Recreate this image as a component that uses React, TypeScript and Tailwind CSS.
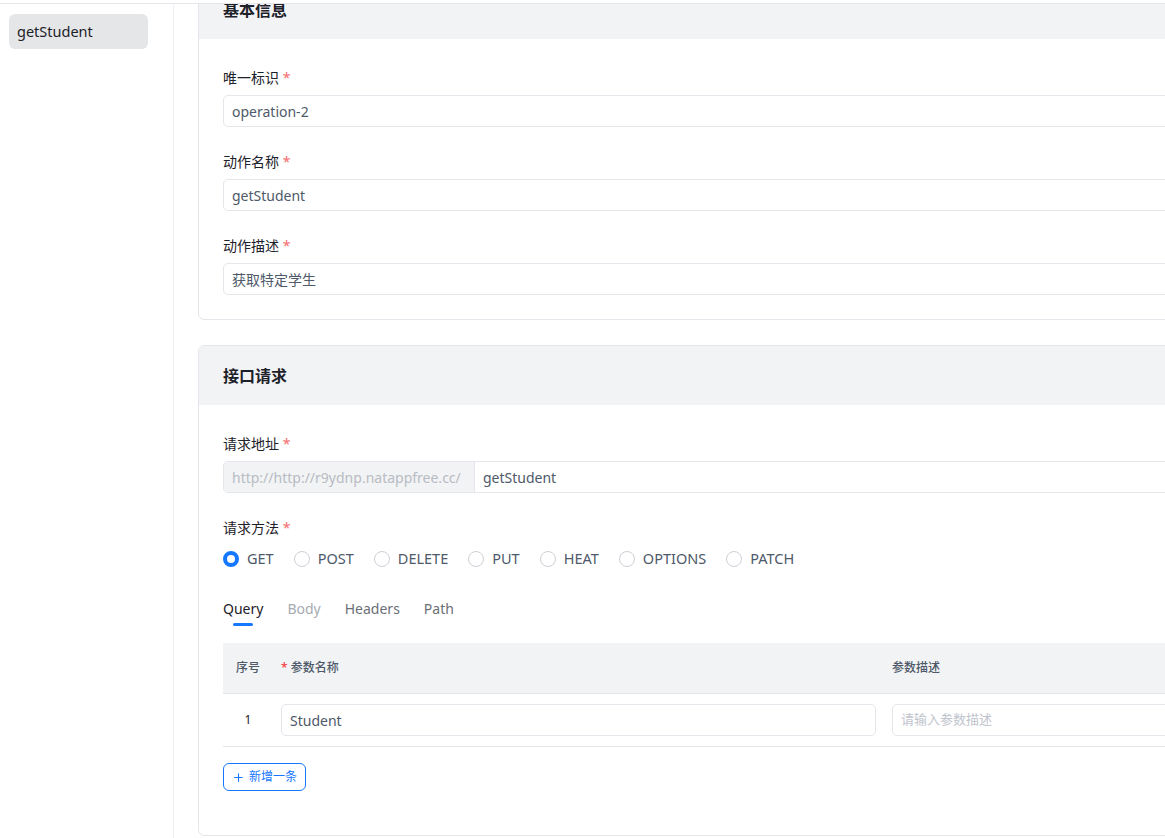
import React from "react";
import { LuPlus } from "react-icons/lu";

const methods = ["GET", "POST", "DELETE", "PUT", "HEAT", "OPTIONS", "PATCH"];

const Label: React.FC<{ text: string }> = ({ text }) => (
  <div className="h-[22px] text-[14px] leading-[22px] text-[#1d2129]">
    {text} <span className="text-[#f56c6c]">*</span>
  </div>
);

const TextInput: React.FC<{ value: string }> = ({ value }) => (
  <div className="mt-[6px] flex h-[32px] items-center rounded-[5px] border border-[#e4e6eb] px-2 text-[14px] text-[#4e5969]">
    {value}
  </div>
);

const Card: React.FC<{ title: string; children: React.ReactNode }> = ({ title, children }) => (
  <section className="w-[1300px] rounded-[6px] border border-[#e5e6eb] bg-white">
    <div className="flex h-[59px] items-center rounded-t-[6px] bg-[#f2f3f5] px-6 text-[16px] font-bold text-[#1d2129]">
      {title}
    </div>
    {children}
  </section>
);

export default function App() {
  return (
    <div className="h-[838px] w-[1165px] overflow-hidden bg-white font-['Noto_Sans','Noto_Sans_CJK_SC',sans-serif]">
      <div className="h-[4px] border-b border-[#e5e6eb]" />
      <div className="flex h-[834px]">
        <aside className="w-[174px] shrink-0 border-r border-[#eff0f2] pt-[10px]">
          <div className="ml-[9px] flex h-[35px] w-[139px] items-center rounded-[6px] bg-[#e5e6e8] px-2 text-[14.5px] text-[#1d2129]">
            getStudent
          </div>
        </aside>

        <main className="flex-1 overflow-hidden pl-[24px]">
          <div className="-mt-[25px] flex flex-col gap-[25px]">
            <Card title="基本信息">
              <div className="flex flex-col gap-6 px-6 pb-6 pt-7">
                <div>
                  <Label text="唯一标识" />
                  <TextInput value="operation-2" />
                </div>
                <div>
                  <Label text="动作名称" />
                  <TextInput value="getStudent" />
                </div>
                <div>
                  <Label text="动作描述" />
                  <TextInput value="获取特定学生" />
                </div>
              </div>
            </Card>

            <Card title="接口请求">
              <div className="px-6 pb-[44px] pt-7">
                <Label text="请求地址" />
                <div className="mt-[6px] flex h-[32px] overflow-hidden rounded-[5px] border border-[#e4e6eb] text-[14px]">
                  <div className="flex w-[251px] items-center border-r border-[#e4e6eb] bg-[#f2f3f5] px-2 text-[#b8bcc3]">
                    http://http://r9ydnp.natappfree.cc/
                  </div>
                  <div className="flex items-center px-2 text-[#4e5969]">getStudent</div>
                </div>

                <div className="mt-6">
                  <Label text="请求方法" />
                  <div className="mt-[6px] flex h-[28px] items-center gap-5">
                    {methods.map((m, i) => (
                      <label key={m} className="flex items-center gap-2 text-[14.5px] text-[#4e5969]">
                        {i === 0 ? (
                          <span className="h-4 w-4 rounded-full border-[4.5px] border-[#1677ff] bg-white" />
                        ) : (
                          <span className="h-4 w-4 rounded-full border border-[#ccd0d6] bg-white" />
                        )}
                        {m}
                      </label>
                    ))}
                  </div>
                </div>

                <div className="mt-[25px] flex gap-6 text-[14px] leading-[22px]">
                  <div className="flex flex-col items-center">
                    <span className="text-[#1d2129]">Query</span>
                    <span className="mt-[3px] h-[3px] w-5 rounded-full bg-[#1677ff]" />
                  </div>
                  <span className="text-[#a8abb2]">Body</span>
                  <span className="text-[#6b6f76]">Headers</span>
                  <span className="text-[#6b6f76]">Path</span>
                </div>

                <div className="mt-[17px]">
                  <div className="flex h-[51px] items-center border-b border-[#e5e6eb] bg-[#f2f3f5] text-[12px] font-medium text-[#4e5969]">
                    <div className="w-[50px] shrink-0 text-center">序号</div>
                    <div className="w-[611px] shrink-0 px-2">
                      <span className="text-[#f53f3f]">*</span> 参数名称
                    </div>
                    <div className="flex-1 px-2">参数描述</div>
                  </div>
                  <div className="flex h-[53px] items-center border-b border-[#e5e6eb]">
                    <div className="w-[50px] shrink-0 text-center text-[12px] text-[#1d2129]">1</div>
                    <div className="w-[611px] shrink-0 px-2">
                      <div className="flex h-[32px] items-center rounded-[5px] border border-[#e4e6eb] px-2 text-[14px] text-[#4e5969]">
                        Student
                      </div>
                    </div>
                    <div className="w-[580px] shrink-0 px-2">
                      <div className="flex h-[32px] items-center rounded-[5px] border border-[#e4e6eb] px-2 text-[13px] text-[#c0c4cc]">
                        请输入参数描述
                      </div>
                    </div>
                  </div>
                </div>

                <button className="mt-4 flex h-[28px] items-center gap-1 rounded-[6px] border border-[#1677ff] px-[8px] text-[12px] text-[#1677ff]">
                  <LuPlus className="h-[13px] w-[13px]" />
                  新增一条
                </button>
              </div>
            </Card>
          </div>
        </main>
      </div>
    </div>
  );
}
